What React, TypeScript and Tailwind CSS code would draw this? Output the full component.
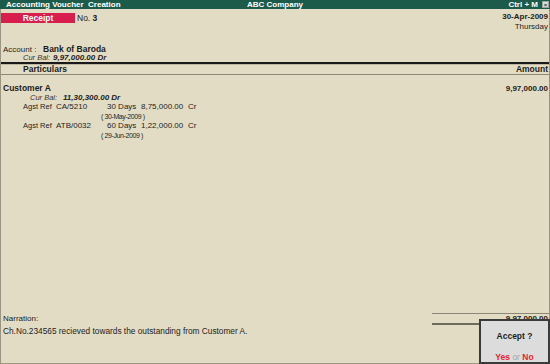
import React from 'react';

const refs = [
  { ref: 'CA/5210', days: '30 Days', amt: '8,75,000.00', due: '( 30-May-2009 )' },
  { ref: 'ATB/0032', days: '60 Days', amt: '1,22,000.00', due: '( 29-Jun-2009 )' },
];

export default function App() {
  return (
    <div className="flex h-[364px] w-[550px] flex-col overflow-hidden bg-[#e3dcc4] font-['Liberation_Sans',Arial,sans-serif] text-[8px] text-[#1c1c1c]">
      {/* title bar */}
      <div className="grid h-[9px] grid-cols-3 bg-[#1c5b4a] text-[8px] font-bold leading-[9px] text-white">
        <span className="pl-[6px]">Accounting Voucher&nbsp; Creation</span>
        <span className="text-center">ABC Company</span>
        <div className="flex items-center justify-end gap-[4px] pr-[1px]">
          <span>Ctrl + M</span>
          <span className="flex h-[7px] w-[7px] items-center justify-center border border-[#9aa79f] bg-[#d8ddd6] text-[6px] leading-none text-[#333]">×</span>
        </div>
      </div>

      <div className="relative flex flex-1 flex-col border-x border-b border-[#9a9480]">
        {/* voucher type + date */}
        <div className="flex h-[36px] justify-between pt-[3px]">
          <div className="mt-[1px] flex items-start">
            <div className="h-[10px] w-[74px] bg-[#d81e4c] text-center text-[8.5px] font-bold leading-[10px] text-white">Receipt</div>
            <span className="ml-[2px] text-[8.5px] leading-[10px]">
              No. <b>3</b>
            </span>
          </div>
          <div className="pr-[1px] text-right leading-[10px]">
            <div className="font-bold">30-Apr-2009</div>
            <div>Thursday</div>
          </div>
        </div>

        {/* account */}
        <div className="pl-[2px]">
          <div className="flex leading-[9px]">
            <span className="w-[40px]">Account :</span>
            <span className="text-[8.5px] font-bold">Bank of Baroda</span>
          </div>
          <div className="flex pl-[20px] leading-[8px]">
            <span className="w-[30px] text-[7.5px] italic text-[#333]">Cur Bal:</span>
            <span className="font-bold italic">9,97,000.00 Dr</span>
          </div>
        </div>

        {/* column header */}
        <div className="h-[2px] bg-[#1a1a1a]" />
        <div className="flex h-[11px] items-center justify-between border-t border-[#bdb7a0] border-b border-b-[#8d8875] pl-[22px] pr-[1px] text-[8.5px] font-bold">
          <span>Particulars</span>
          <span>Amount</span>
        </div>

        {/* entries */}
        <div className="flex-1 pt-[9px]">
          <div className="flex justify-between pl-[2px] pr-[1px] font-bold leading-[9px]">
            <span className="text-[8.5px]">Customer A</span>
            <span>9,97,000.00</span>
          </div>
          <div className="flex pl-[29px] leading-[9px]">
            <span className="w-[33px] text-[7.5px] italic text-[#333]">Cur Bal:</span>
            <span className="font-bold italic">11,30,300.00 Dr</span>
          </div>
          {refs.map((r) => (
            <div key={r.ref}>
              <div className="flex pl-[22px] leading-[10px]">
                <span className="w-[33px] text-[7.5px]">Agst Ref</span>
                <span className="w-[51px]">{r.ref}</span>
                <span className="w-[34px]">{r.days}</span>
                <span className="w-[47px]">{r.amt}</span>
                <span>Cr</span>
              </div>
              <div className="pl-[100px] text-[7px] leading-[9px] tracking-[-0.4px]">{r.due}</div>
            </div>
          ))}
        </div>

        {/* narration + total */}
        <div className="flex h-[50px] items-start">
          <div className="flex-1 pl-[2px] pt-[1px] leading-[9px] text-[#222]">
            <div>Narration:</div>
            <div className="mt-[4px] text-[8.3px]">Ch.No.234565 recieved towards the outstanding from Customer A.</div>
          </div>
          <div className="w-[117px]">
            <div className="h-[1px] bg-[#8d8875]" />
            <div className="pr-[1px] pt-[1px] text-right font-bold leading-[8px]">9,97,000.00</div>
            <div className="h-[2px] bg-[#6f6b5c]" />
          </div>
        </div>

        {/* accept dialog */}
        <div className="absolute bottom-[-1px] right-[-1px] flex h-[45px] w-[71px] flex-col items-center justify-between border-2 border-[#3a3a3a] bg-[#dcdcdc] pt-[11px] font-bold leading-[9px]">
          <span className="text-[8.5px]">Accept ?</span>
          <span className="text-[8.5px]">
            <span className="text-[#ee1c2e]">Yes</span>
            <span className="font-normal text-[#a5a5a5]"> or </span>
            <span className="text-[#ee1c2e]">No</span>
          </span>
        </div>
      </div>
    </div>
  );
}
